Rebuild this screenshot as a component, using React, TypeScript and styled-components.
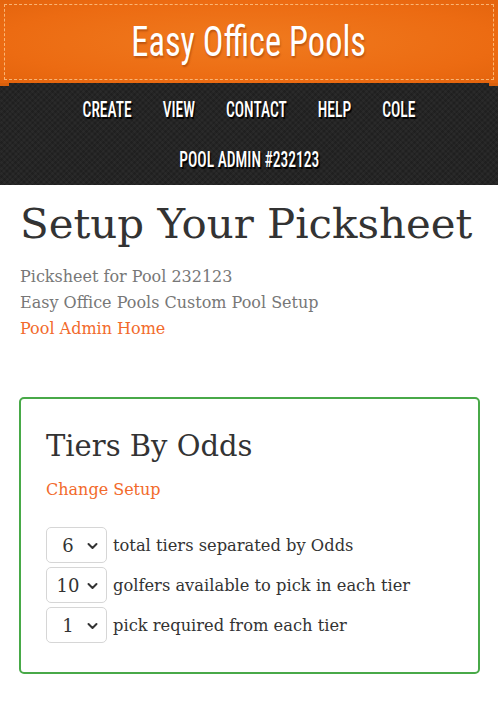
import React from "react";
import styled, { createGlobalStyle } from "styled-components";

const Global = createGlobalStyle`
  html, body { margin: 0; padding: 0; background: #fff; }
  body { font-family: "DejaVu Serif", "Liberation Serif", serif; }
  * { box-sizing: border-box; }
`;

const Header = styled.header`
  position: relative;
  z-index: 1;
  height: 83px;
  background: radial-gradient(ellipse at center, #f07a1e 0%, #ec6b12 70%, #e4640d 100%);
  display: flex;
  align-items: center;
  justify-content: center;
  &::before {
    content: "";
    position: absolute;
    left: 4px;
    right: 4px;
    top: 4px;
    bottom: 3px;
    border: 1px dashed rgba(255, 200, 140, 0.8);
    pointer-events: none;
  }
`;

const Fold = styled.span<{ $side: "left" | "right" }>`
  position: absolute;
  bottom: -3px;
  ${(p) => p.$side}: 0;
  width: 9px;
  height: 3px;
  background: #d9600c;
`;

const Brand = styled.h1`
  margin: 0 0 1px;
  font-family: Roboto, "DejaVu Sans", sans-serif;
  font-stretch: 75%;
  font-weight: 400;
  font-size: 43px;
  line-height: 50px;
  color: #fff;
  transform: scaleX(0.8);
  text-shadow: 1px 2px 2px rgba(120, 40, 0, 0.4);
`;

const Nav = styled.nav`
  background-color: #252525;
  background-image:
    repeating-linear-gradient(45deg, rgba(255,255,255,0.025) 0 2px, transparent 2px 4px),
    repeating-linear-gradient(-45deg, rgba(0,0,0,0.15) 0 2px, transparent 2px 4px);
  height: 102px;
  display: flex;
  flex-direction: column;
  align-items: center;
  padding-top: 14px;
  gap: 24px;
`;

const NavRow = styled.div`
  display: flex;
  justify-content: center;
  gap: 44px;
  transform: scaleX(0.705);
`;

const NavLink = styled.a`
  font-family: Roboto, "DejaVu Sans", sans-serif;
  font-stretch: 75%;
  font-weight: 500;
  font-size: 22px;
  line-height: 26px;
  color: #fff;
  text-decoration: none;
  text-transform: uppercase;
  text-shadow: 2px 2px 1px #000;
`;

const Main = styled.main`
  padding: 0 18px 0 20px;
`;

const Title = styled.h2`
  margin: 11px 0 12px;
  font-weight: 400;
  font-size: 41.9px;
  line-height: 56px;
  color: #333;
  white-space: nowrap;
`;

const Sub = styled.p`
  margin: 0;
  font-size: 16px;
  line-height: 26px;
  color: #777;
`;

const OrangeLink = styled.a`
  display: block;
  font-size: 16px;
  line-height: 26px;
  color: #f26a2b;
  text-decoration: none;
`;

const Card = styled.section`
  margin: 55px 0 0 -1px;
  width: 461px;
  border: 2px solid #48a948;
  border-radius: 5px;
  padding: 25px 25px 29px;
`;

const CardTitle = styled.h3`
  margin: 2px 0 11px;
  font-weight: 400;
  font-size: 29px;
  line-height: 40px;
  color: #333;
`;

const Rows = styled.div`
  margin-top: 24px;
  display: flex;
  flex-direction: column;
  gap: 4px;
`;

const Row = styled.label`
  display: flex;
  align-items: center;
  gap: 6px;
  font-size: 16.3px;
  color: #333;
`;

const SelectBox = styled.div`
  position: relative;
  width: 61px;
  height: 36px;
  border: 1px solid #d6d6d6;
  border-radius: 5px;
  background: #fff;
  display: flex;
  align-items: center;
`;

const SelectValue = styled.span`
  width: 42px;
  text-align: center;
  font-size: 18px;
  color: #333;
`;

const Chevron = styled.svg`
  position: absolute;
  right: 8px;
  top: 14px;
`;

function Select({ value }: { value: string }) {
  return (
    <SelectBox>
      <SelectValue>{value}</SelectValue>
      <Chevron width="11" height="8" viewBox="0 0 11 8">
        <path d="M1.5 2 L5.5 6 L9.5 2" fill="none" stroke="#333" strokeWidth="2" strokeLinecap="round" strokeLinejoin="round" />
      </Chevron>
    </SelectBox>
  );
}

export default function App() {
  return (
    <>
      <Global />
      <Header>
        <Brand>Easy Office Pools</Brand>
        <Fold $side="left" />
        <Fold $side="right" />
      </Header>
      <Nav>
        <NavRow>
          <NavLink>Create</NavLink>
          <NavLink>View</NavLink>
          <NavLink>Contact</NavLink>
          <NavLink>Help</NavLink>
          <NavLink>Cole</NavLink>
        </NavRow>
        <NavRow>
          <NavLink>Pool Admin #232123</NavLink>
        </NavRow>
      </Nav>
      <Main>
        <Title>Setup Your Picksheet</Title>
        <Sub>Picksheet for Pool 232123</Sub>
        <Sub>Easy Office Pools Custom Pool Setup</Sub>
        <OrangeLink>Pool Admin Home</OrangeLink>
        <Card>
          <CardTitle>Tiers By Odds</CardTitle>
          <OrangeLink>Change Setup</OrangeLink>
          <Rows>
            <Row><Select value="6" />total tiers separated by Odds</Row>
            <Row><Select value="10" />golfers available to pick in each tier</Row>
            <Row><Select value="1" />pick required from each tier</Row>
          </Rows>
        </Card>
      </Main>
    </>
  );
}
